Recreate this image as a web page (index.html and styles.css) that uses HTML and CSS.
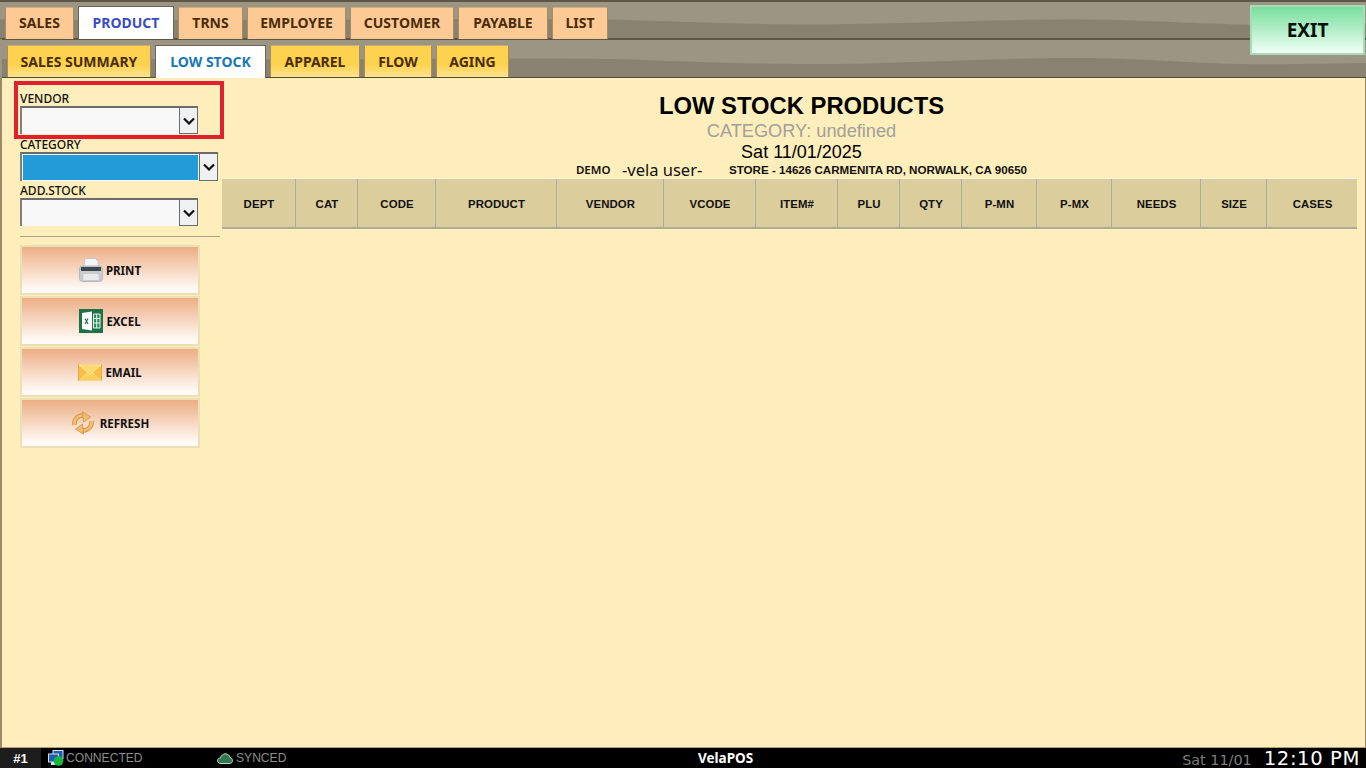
FILE: index.html
```html
<!DOCTYPE html>
<html lang="en">
<head>
<meta charset="utf-8">
<title>VelaPOS - Low Stock Products</title>
<link rel="stylesheet" href="styles.css">
</head>
<body>
<div class="app">
  <header class="nav">
    <div class="band band-main">
      <svg class="wave" viewBox="0 0 1366 37" preserveAspectRatio="none"><path d="M0 18C300 20 500 16 608 18C680 20 740 23 810 23C900 23 980 18 1072 18C1140 18 1190 22 1239 23C1290 24 1330 22 1366 22V37H0Z"/></svg>
      <nav class="tabs">
        <a class="tab tab-w69">SALES</a>
        <a class="tab tab-active tab-w96">PRODUCT</a>
        <a class="tab tab-w65">TRNS</a>
        <a class="tab tab-w99">EMPLOYEE</a>
        <a class="tab tab-w104">CUSTOMER</a>
        <a class="tab tab-w90">PAYABLE</a>
        <a class="tab tab-w56">LIST</a>
      </nav>
    </div>
    <div class="band band-sub">
      <svg class="wave" viewBox="0 0 1366 37" preserveAspectRatio="none"><path d="M0 19C300 21 500 17 608 19C680 21 740 24 810 24C900 24 980 18 1072 18C1140 18 1190 23 1239 24C1290 25 1330 23 1366 23V37H0Z"/></svg>
      <nav class="tabs tabs-sub">
        <a class="subtab subtab-w144">SALES SUMMARY</a>
        <a class="subtab subtab-active subtab-w111">LOW STOCK</a>
        <a class="subtab subtab-w90">APPAREL</a>
        <a class="subtab subtab-w68">FLOW</a>
        <a class="subtab subtab-w73">AGING</a>
      </nav>
    </div>
    <button class="exit">EXIT</button>
  </header>

  <main class="content">
    <aside class="side">
      <div class="highlight"></div>
      <label class="field-label">VENDOR</label>
      <div class="select">
        <div class="select-value"></div>
        <div class="select-btn"><svg viewBox="0 0 12 8"><path d="M1 1.500 6 6.500l5-5"/></svg></div>
      </div>
      <label class="field-label">CATEGORY</label>
      <div class="select select-wide">
        <div class="select-value select-value-on"></div>
        <div class="select-btn"><svg viewBox="0 0 12 8"><path d="M1 1.500 6 6.500l5-5"/></svg></div>
      </div>
      <label class="field-label">ADD.STOCK</label>
      <div class="select">
        <div class="select-value"></div>
        <div class="select-btn"><svg viewBox="0 0 12 8"><path d="M1 1.500 6 6.500l5-5"/></svg></div>
      </div>
      <hr class="rule">
      <div class="actions">
        <button class="action">
          <svg class="icon" viewBox="0 0 24 24">
            <path d="M6 .5h10.500l2.500 2.500 .5 7H4.500z" fill="#f5f6f7" stroke="#bcc1c5" stroke-width=".8"/>
            <rect x=".5" y="8" width="23" height="15.500" rx="3" fill="#c9cdd0" stroke="#a9aeb3" stroke-width=".8"/>
            <rect x="2" y="9" width="20" height="4" fill="#3e4750"/>
            <rect x="4" y="15.500" width="16" height="7" fill="#e8ebed" stroke="#b4b9bd" stroke-width=".5"/>
          </svg>
          <span>PRINT</span>
        </button>
        <button class="action">
          <svg class="icon" viewBox="0 0 24 24">
            <rect width="24" height="24" fill="#1f7246"/>
            <path d="M3 4l10-1.500v19L3 20z" fill="#fff"/>
            <path d="M6 9.500l3 5.500M9 9.500l-3 5.500" stroke="#1f7246" stroke-width="1.200"/>
            <path d="M14.500 5h6.500v14h-6.500zM14.500 9.500h6.500M14.500 14h6.500M17.700 5v14" fill="#2e8a58" stroke="#eaf5ee" stroke-width="1"/>
          </svg>
          <span>EXCEL</span>
        </button>
        <button class="action">
          <svg class="icon icon-mail" viewBox="0 0 24 17">
            <rect x=".5" y=".5" width="23" height="16" fill="#f9bf45" stroke="#e3a232" stroke-width=".8"/>
            <path d="M1 16.500l9-8.500h4l9 8.500z" fill="#fccf5c" stroke="#f3e3a0" stroke-width=".7"/>
            <path d="M.8 .8 12 10.500 23.200 .8z" fill="#fdd96f" stroke="#fff3c4" stroke-width=".7"/>
          </svg>
          <span>EMAIL</span>
        </button>
        <button class="action">
          <svg class="icon icon-refresh" viewBox="0 0 24 24">
            <path d="M3.500 14C2.800 9 6.500 4.500 12 4.500" fill="none" stroke="#c98a3c" stroke-width="4.400"/>
            <path d="M3.500 14C2.800 9 6.500 4.500 12 4.500" fill="none" stroke="#f2bd6e" stroke-width="3"/>
            <path d="M11.500 .8 19.500 6 12.500 11z" fill="#f2bd6e" stroke="#c98a3c" stroke-width=".7"/>
            <path d="M20.500 10C21.200 15 17.500 19.500 12 19.500" fill="none" stroke="#c98a3c" stroke-width="4.400"/>
            <path d="M20.500 10C21.200 15 17.500 19.500 12 19.500" fill="none" stroke="#f2bd6e" stroke-width="3"/>
            <path d="M12.500 23.200 4.500 18 11.500 13z" fill="#f2bd6e" stroke="#c98a3c" stroke-width=".7"/>
          </svg>
          <span>REFRESH</span>
        </button>
      </div>
    </aside>

    <section class="report">
      <div class="report-head">
        <h1 class="title">LOW STOCK PRODUCTS</h1>
        <div class="category">CATEGORY: undefined</div>
        <div class="date">Sat 11/01/2025</div>
        <div class="meta">
          <span class="meta-demo">DEMO</span>
          <span class="meta-user">-vela user-</span>
          <span class="meta-store">STORE - 14626 CARMENITA RD, NORWALK, CA 90650</span>
        </div>
      </div>
      <div class="thead">
        <div class="th">DEPT</div>
        <div class="th">CAT</div>
        <div class="th">CODE</div>
        <div class="th">PRODUCT</div>
        <div class="th">VENDOR</div>
        <div class="th">VCODE</div>
        <div class="th">ITEM#</div>
        <div class="th">PLU</div>
        <div class="th">QTY</div>
        <div class="th">P-MN</div>
        <div class="th">P-MX</div>
        <div class="th">NEEDS</div>
        <div class="th">SIZE</div>
        <div class="th">CASES</div>
      </div>
    </section>
  </main>

  <footer class="status">
    <div class="term">#1</div>
    <div class="conn">
      <svg class="conn-icon" viewBox="0 0 16 16">
        <rect x="5" y="0.500" width="10" height="8" fill="#1d5fae" stroke="#cfe0f2"/>
        <rect x="0.500" y="4" width="10" height="8" fill="#1d5fae" stroke="#cfe0f2"/>
        <rect x="3" y="12" width="6" height="3" fill="#cfe0f2"/>
        <circle cx="10.500" cy="11" r="4.800" fill="#17b83a"/>
      </svg>
      <span>CONNECTED</span>
    </div>
    <div class="sync">
      <svg class="sync-icon" viewBox="0 0 16 11"><path d="M4 10.500C1.500 10.500.5 9 .5 7.500S2 5 3.500 5C4 2.500 6 .8 8.500.8 11 .8 12.500 2.500 13 4.500c1.500.2 2.500 1.500 2.500 3s-1 3-3 3z" fill="#2f7a4c" stroke="#c9d4cc"/></svg>
      <span>SYNCED</span>
    </div>
    <div class="brand">VelaPOS</div>
    <div class="clock">
      <span class="clock-date">Sat 11/01</span>
      <span class="clock-time">12:10 PM</span>
    </div>
  </footer>
</div>
</body>
</html>
```
FILE: styles.css
```css
* { box-sizing: border-box; }
html, body { margin: 0; padding: 0; height: 100%; overflow: hidden; }
body { font-family: "Liberation Sans", Arial, sans-serif; background: #000; }

.app { width: 1366px; height: 768px; display: flex; flex-direction: column; }

/* top navigation */
.nav { position: relative; height: 78px; flex: none; background: #9d9584; }
.band { position: relative; background: #9d9584; }
.band-main { height: 39px; border-top: 2px solid #5e5644; padding: 5px 0 0 5px; border-bottom: 1px solid #5e5644; }
.band-sub { height: 39px; border-top: 1px solid #5e5644; border-bottom: 1px solid #4f4a3a; padding: 5px 0 0 5px; margin-left: 2px; }
.wave { position: absolute; left: 0; top: 0; width: 100%; height: 100%; fill: #8a8270; }
.tabs { position: relative; display: flex; gap: 4px; height: 100%; }

.tab, .subtab {
  display: flex; align-items: center; justify-content: center;
  font-family: "Noto Sans", Tahoma, sans-serif; font-weight: 700; font-size: 14px;
  color: #4a2c0c; border: 1px solid #a88c5a; border-bottom: 0; border-top-color: #c7ae7c;
}
.tab { background: #fdca95; height: 32px; padding-bottom: 2px; }
.tab-active { background: #fff; color: #3a4cc4; height: 34px; margin-top: -1px; border-color: #6a6658; padding-bottom: 2px; }
.subtab { background: linear-gradient(#fdd24f 0%, #fdd24f 60%, #fee28b 100%); height: 32px; padding-bottom: 1px; }
.subtab-active { background: #fff; color: #1877b4; height: 33px; border-color: #6a6658; }

.tab-w69 { width: 69px; }
.tab-w96 { width: 96px; }
.tab-w65 { width: 65px; }
.tab-w99 { width: 99px; }
.tab-w104 { width: 104px; }
.tab-w90 { width: 90px; }
.tab-w56 { width: 56px; }
.subtab-w144 { width: 144px; }
.subtab-w111 { width: 111px; }
.subtab-w90 { width: 90px; }
.subtab-w68 { width: 68px; }
.subtab-w73 { width: 73px; }

.exit {
  position: absolute; left: 1250px; top: 5px; width: 115px; height: 50px;
  background: linear-gradient(#77de9c, #f1fff6);
  border: 2px solid #a6dcb8; color: #0a0f0a; padding: 0;
  font-family: "Noto Sans", Tahoma, sans-serif; font-weight: 700; font-size: 19px;
}

/* content */
.content {
  flex: 1; display: flex; min-height: 0;
  background: #feeebb;
  border-left: 2px solid #9c8a64; border-right: 1px solid #9c8a64; border-bottom: 1px solid #b0a078;
}

/* sidebar */
.side { position: relative; width: 220px; flex: none; padding: 14px 0 0 18px; display: flex; flex-direction: column; align-items: flex-start; }
.highlight { position: absolute; left: 12px; top: 3px; width: 210px; height: 58px; border: 4px solid #e0202c; pointer-events: none; }
.field-label { font-family: "Noto Sans", Tahoma, sans-serif; font-size: 12px; font-weight: 500; color: #111; line-height: 14px; height: 14px; }
.select { display: flex; width: 178px; height: 28px; margin-bottom: 4px; background: #f7f7f7; border-top: 2px solid #6b6b6b; border-left: 2px solid #807f78; }
.select-wide { width: 198px; height: 29px; margin-bottom: 3px; }
.select-value { flex: 1; background: #f8f8f8; }
.select-value-on { background: #229bd8; border: 1px solid #f2f8fb; }
.select-btn { width: 19px; height: 100%; background: #eef0f2; border: 1px solid #6b6b6b; border-top: 0; display: flex; align-items: center; justify-content: center; }
.select-btn svg { width: 12px; height: 8px; fill: none; stroke: #111; stroke-width: 2.200; }
.rule { width: 200px; height: 1px; margin: 6px 0 8px; border: 0; background: #a9a288; }

.actions { display: flex; flex-direction: column; gap: 1px; }
.action {
  display: flex; align-items: center; justify-content: center; gap: 3px;
  width: 180px; height: 50px; padding: 0;
  background: linear-gradient(#edae85, #fffaf6 92%);
  border: 2px solid #ecdfb4;
  font-family: "Noto Sans", Tahoma, sans-serif; font-size: 11.500px; font-weight: 700; color: #111;
}
.icon { width: 24px; height: 24px; flex: none; }
.icon-mail { height: 17px; }
.icon-refresh { margin-right: 2px; }

/* report */
.report { flex: 1; min-width: 0; }
.report-head { padding: 15px 8px 0 24px; text-align: center; color: #000; height: 100px; }
.title { margin: 0; font-size: 23.800px; line-height: 26px; font-weight: 700; }
.category { font-size: 18.200px; line-height: 21px; color: #a0a09a; margin-top: 2px; }
.date { font-size: 18px; line-height: 21px; }
.meta { display: flex; justify-content: center; align-items: center; height: 16px; margin-top: -2px; color: #111; text-align: left; }
.meta-demo { font-family: "Noto Sans", Tahoma, sans-serif; font-size: 11.500px; font-weight: 600; width: 46px; }
.meta-user { font-family: "Noto Sans", Tahoma, sans-serif; font-size: 16.500px; width: 107px; }
.meta-store { font-size: 11.600px; font-weight: 700; }

.thead {
  display: grid;
  grid-template-columns: 74px 62px 78px 121px 107px 92px 82px 62px 62px 75px 75px 89px 66px 90px;
  height: 51px; width: 1135px;
  background: #dccd9c; border-top: 1px solid #f6f2e2; border-bottom: 2px solid #aeaa9c;
}
.th {
  display: flex; align-items: center; justify-content: center; padding: 2px 0 0 1px;
  font-size: 11.400px; font-weight: 700; color: #111; border-right: 1px solid #aeaa9c; letter-spacing: .1px;
}
.th:last-child { border-right: 0; }

/* status bar */
.status { position: relative; height: 20px; flex: none; background: #000; display: flex; align-items: center; color: #8c8c8c; font-size: 12.100px; }
.term { width: 41px; height: 100%; background: #1d1d1d; color: #fff; font-weight: 700; font-size: 13px; display: flex; align-items: center; justify-content: center; }
.conn { display: flex; align-items: center; gap: 2px; margin-left: 7px; width: 169px; }
.conn-icon { width: 16px; height: 16px; }
.sync { display: flex; align-items: center; gap: 3px; }
.sync-icon { width: 16px; height: 11px; }
.brand { position: absolute; left: 698px; top: 1px; color: #fff; font-family: "Noto Sans", Tahoma, sans-serif; font-weight: 700; font-size: 13.500px; line-height: 18px; }
.clock { margin-left: auto; display: flex; align-items: center; gap: 12px; padding-right: 6px; font-family: "DejaVu Sans", Verdana, sans-serif; }
.clock-date { font-size: 14.400px; color: #7d7d7d; padding-top: 3px; }
.clock-time { font-size: 19.600px; color: #fff; letter-spacing: .6px; }
```
